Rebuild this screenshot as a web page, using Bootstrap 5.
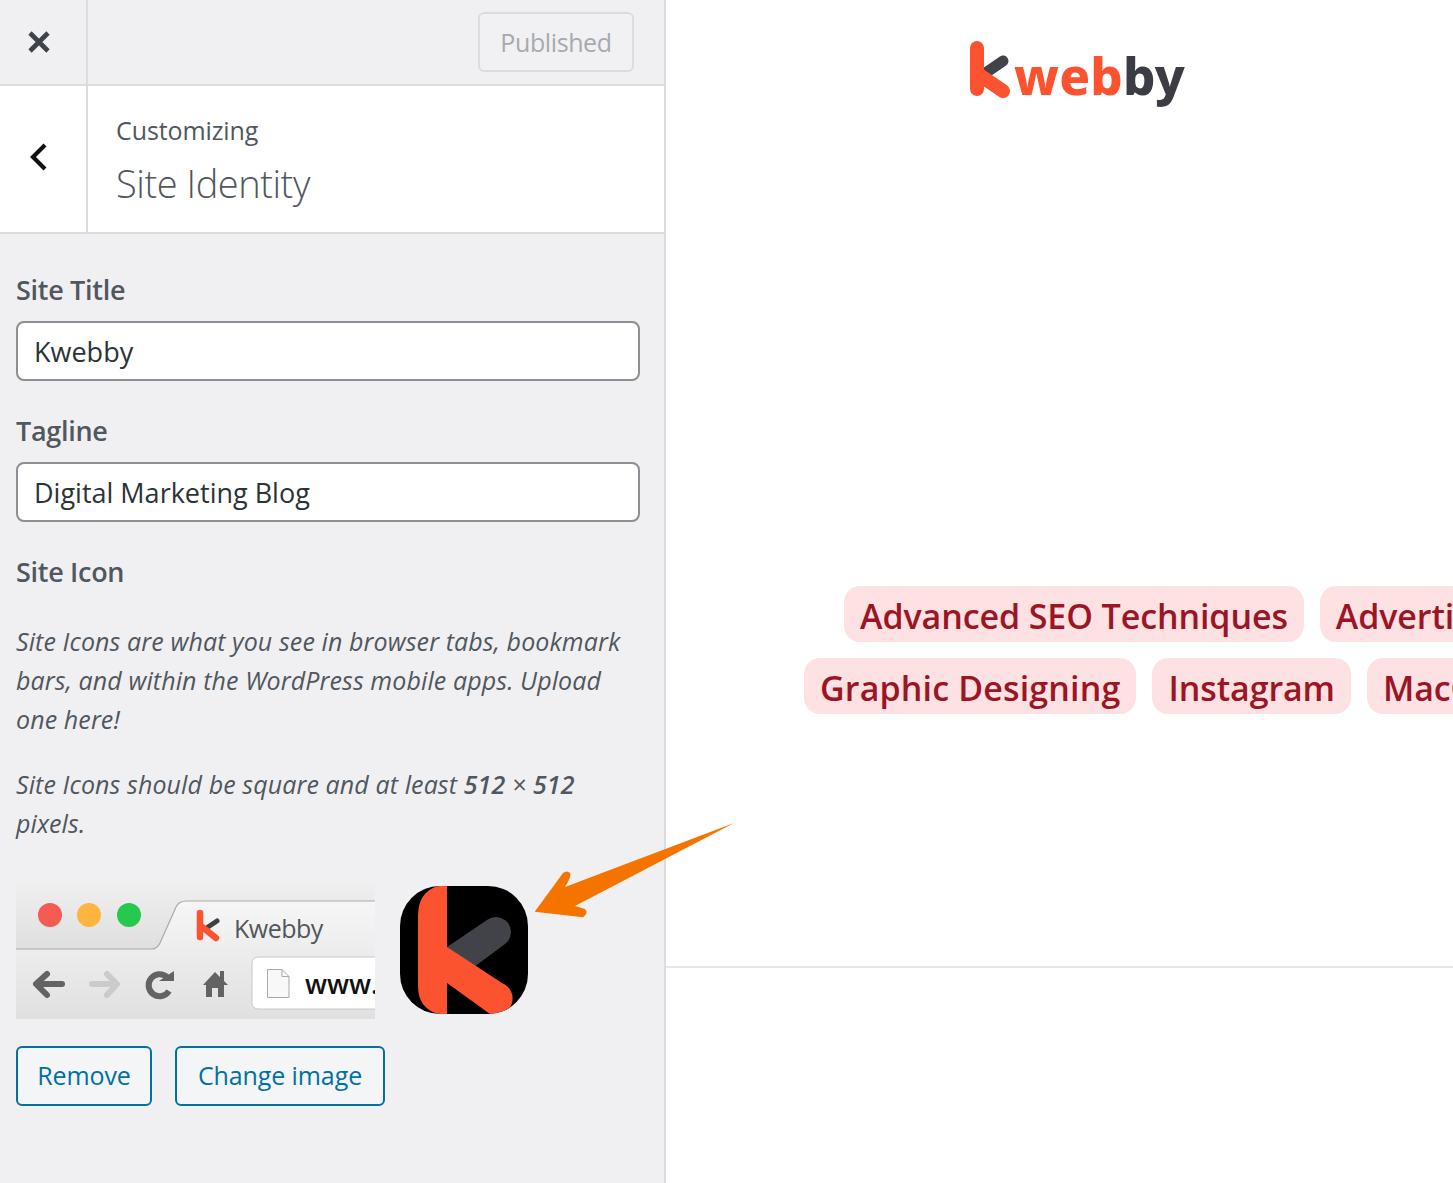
<!DOCTYPE html>
<html lang="en">
<head>
    <meta charset="UTF-8">
    <meta name="viewport" content="width=device-width, initial-scale=1.0">
    <title>Site Identity</title>
    <link href="https://cdn.jsdelivr.net/npm/bootstrap@5.3.0/dist/css/bootstrap.min.css" rel="stylesheet">
    <style>
        html, body { height: 100%; overflow: hidden; }
        body { font-family: "Open Sans", "Noto Sans", sans-serif; color: #50575e; background: #fff; position: relative; }
        .side-panel { width: 666px; height: 1183px; flex: none; background: #f0f0f3; border-right: 2px solid #dcdce0; }
        .top-bar { height: 86px; border-bottom: 2px solid #dcdcde; }
        .close-box { width: 88px; border-right: 2px solid #dcdcde; }
        .publish-btn { width: 156px; height: 60px; margin: 12px 30px 0 0; padding: 2px 0 0; font-size: 25px; letter-spacing: -.4px; color: #a7aaad; background: #f1f1f3; border: 2px solid #dcdcde; border-radius: 6px; }
        .title-bar { height: 148px; background: #fff; border-bottom: 2px solid #dcdcde; }
        .back-box { width: 88px; border-right: 2px solid #dcdcde; }
        .title-text { padding: 24px 0 0 28px; }
        .title-small { font-size: 25px; line-height: 40px; letter-spacing: -.1px; color: #50575e; }
        .title-big { font-size: 38px; line-height: 66px; font-weight: 300; letter-spacing: -.45px; color: #50575e; }
        .panel-body { padding: 36px 0 0 16px; }
        .field-label { display: block; margin: 0 0 11px; font-size: 27px; line-height: 40px; font-weight: 600; letter-spacing: -.3px; color: #50575e; }
        .field-input { width: 624px; height: 60px; margin-bottom: 30px; padding: 0 16px; font-size: 27px; color: #2c3338; background: #fff; border: 2px solid #8c8f94; border-radius: 8px; }
        .field-input:focus { border-color: #8c8f94; box-shadow: none; color: #2c3338; }
        .help-text { margin: 0 0 26px; font-size: 25px; line-height: 39px; font-style: italic; letter-spacing: .1px; color: #50575e; }
        .help-text b { font-weight: 600; }
        .help-text.first { margin-top: 30px; }
        .icon-row { margin-top: 37px; gap: 25px; }
        .tab-preview { width: 359px; height: 139px; display: block; }
        .app-icon { width: 128px; height: 128px; margin-top: 6px; display: block; }
        .btn-row { margin-top: 27px; gap: 23px; }
        .outline-btn { height: 60px; padding: 0; font-size: 25px; letter-spacing: -.1px; color: #0071a1; background: #f3f5f6; border: 2px solid #0071a1; border-radius: 6px; }
        .remove-btn { width: 136px; }
        .change-btn { width: 210px; }
        .preview-pane { min-width: 0; overflow: hidden; }
        .site-head { height: 968px; border-bottom: 2px solid #e6e6e8; }
        .brand { padding: 25px 0 0 303px; height: 150px; }
        .brand-word { font-family: "Noto Sans", sans-serif; font-size: 51px; line-height: 100px; font-weight: 800; letter-spacing: .2px; color: #fb5230; margin-left: -3px; }
        .brand-word b { color: #3c3c44; font-weight: 800; }
        .tag-lines { margin-top: 436px; gap: 16px; }
        .tag-line { gap: 16px; white-space: nowrap; }
        .tag-line.one { padding-left: 178px; }
        .tag-line.two { padding-left: 138px; }
        .tag-pill { height: 56px; line-height: 60px; padding: 0 16px; font-size: 34px; font-weight: 600; letter-spacing: -.1px; color: #9b1524; background: #fde1e3; border-radius: 16px; flex: none; }
        .tag-pill.loose { letter-spacing: .15px; }
        .arrow-over { position: absolute; left: 530px; top: 818px; width: 210px; height: 104px; }
    </style>
</head>
<body>
    <div class="d-flex">
        <div class="side-panel">
            <div class="top-bar d-flex justify-content-between">
                <div class="close-box d-flex align-items-center justify-content-center pe-2">
                    <svg width="24" height="24" viewBox="0 0 24 24"><path d="M3 3 21 21M21 3 3 21" stroke="#3c434a" stroke-width="4.6" fill="none"/></svg>
                </div>
                <button class="publish-btn" type="button" disabled>Published</button>
            </div>
            <div class="title-bar d-flex">
                <div class="back-box d-flex align-items-center justify-content-center pe-2 pb-1">
                    <svg width="20" height="30" viewBox="0 0 20 30"><path d="M16 3 4 15 16 27" stroke="#111" stroke-width="4.2" fill="none"/></svg>
                </div>
                <div class="title-text">
                    <div class="title-small">Customizing</div>
                    <div class="title-big">Site Identity</div>
                </div>
            </div>
            <form class="panel-body">
                <label class="field-label" for="siteTitle">Site Title</label>
                <input class="form-control field-input" id="siteTitle" value="Kwebby">
                <label class="field-label" for="tagline">Tagline</label>
                <input class="form-control field-input" id="tagline" value="Digital Marketing Blog">
                <div class="field-label mb-0">Site Icon</div>
                <p class="help-text first">Site Icons are what you see in browser tabs, bookmark<br>bars, and within the WordPress mobile apps. Upload<br>one here!</p>
                <p class="help-text">Site Icons should be square and at least <b>512</b> × <b>512</b><br>pixels.</p>
                <div class="icon-row d-flex align-items-start">
                    <svg class="tab-preview" viewBox="0 0 359 139" role="img" aria-label="Browser tab preview">
                        <defs>
                            <linearGradient id="chromeBg" x1="0" y1="0" x2="0" y2="1"><stop offset="0" stop-color="#f0f0f0"/><stop offset=".5" stop-color="#dfdfdf"/><stop offset=".51" stop-color="#ececec"/><stop offset="1" stop-color="#dcdcdc"/></linearGradient>
                            <linearGradient id="tabBg" x1="0" y1="0" x2="0" y2="1"><stop offset="0" stop-color="#f6f6f6"/><stop offset="1" stop-color="#e0e0e0"/></linearGradient>
                        </defs>
                        <rect width="359" height="139" fill="url(#chromeBg)"/>
                        <path d="M0 69H136Q141 69 144 63L160 27Q163 21 170 21H359V139H0Z" fill="url(#tabBg)"/>
                        <path d="M0 69H136Q141 69 144 63L160 27Q163 21 170 21H359" fill="none" stroke="#a9a9a9" stroke-width="1.2"/>
                        <circle cx="34" cy="35" r="12" fill="#f45c52"/>
                        <circle cx="73" cy="35" r="12" fill="#fdb540"/>
                        <circle cx="113" cy="35" r="12" fill="#27c84f"/>
                        <path d="M192 47 201 41" stroke="#3f3f46" stroke-width="5" stroke-linecap="round"/>
                        <path d="M184 33V57M185 46 200 58" stroke="#fb5230" stroke-width="6.5" stroke-linecap="round" fill="none"/>
                        <text x="218" y="58" font-family="Open Sans, sans-serif" font-size="25" letter-spacing="-.5" fill="#52565b">Kwebby</text>
                        <path d="M46 104H22M31 94 20 104 31 115" stroke="#636363" stroke-width="6" stroke-linecap="round" stroke-linejoin="round" fill="none"/>
                        <path d="M76 104H100M91 94 101 104 91 115" stroke="#cbcbcb" stroke-width="6" stroke-linecap="round" stroke-linejoin="round" fill="none"/>
                        <path d="M153 111A11 11 0 1 1 151 97" stroke="#636363" stroke-width="6" fill="none"/>
                        <path d="M143 101H158V91Z" fill="#636363"/>
                        <path d="M187 105 199 92 204 97V91H208V101L212 105H208V117H202V108H196V117H190V105Z" fill="#636363"/>
                        <rect x="236" y="77" width="140" height="52" rx="6" fill="#fff" stroke="#c8c8c8"/>
                        <path d="M251.500 89.500H266L273 96.500V117.500H251.500Z M266 89.500V96.500H273" fill="#f8f8f8" stroke="#a9a9a9"/>
                        <text x="289" y="114" font-family="Open Sans, sans-serif" font-size="27" font-weight="600" fill="#111">www.</text>
                    </svg>
                    <svg class="app-icon" viewBox="0 0 128 128" role="img" aria-label="Site icon">
                        <defs><clipPath id="iconClip"><rect width="128" height="128" rx="40"/></clipPath></defs>
                        <g clip-path="url(#iconClip)">
                            <rect width="128" height="128" fill="#000"/>
                            <path d="M47 61 87 34A15 15 0 0 1 105 58L70 84Z" fill="#424249"/>
                            <path d="M18 30Q18 6 38 0H47V61L102 97A16 16 0 0 1 90 128L47 97V128H38Q18 122 18 100Z" fill="#fb5230"/>
                        </g>
                    </svg>
                </div>
                <div class="btn-row d-flex">
                    <button class="outline-btn remove-btn" type="button">Remove</button>
                    <button class="outline-btn change-btn" type="button">Change image</button>
                </div>
            </form>
        </div>
        <div class="preview-pane flex-grow-1">
            <div class="site-head">
                <div class="brand d-flex align-items-start">
                    <svg width="48" height="62" viewBox="0 0 48 62" class="mt-3">
                        <path d="M18 31 34 20" stroke="#424249" stroke-width="11" stroke-linecap="round"/>
                        <path d="M8 7V48M9 33 34 50" stroke="#fb5230" stroke-width="14" stroke-linecap="round" fill="none"/>
                    </svg>
                    <span class="brand-word">web<b>by</b></span>
                </div>
                <div class="tag-lines d-flex flex-column">
                    <div class="tag-line one d-flex"><span class="tag-pill">Advanced SEO Techniques</span><span class="tag-pill">Advertising</span></div>
                    <div class="tag-line two d-flex"><span class="tag-pill loose">Graphic Designing</span><span class="tag-pill">Instagram</span><span class="tag-pill">MacOS</span></div>
                </div>
            </div>
        </div>
    </div>
    <svg class="arrow-over" viewBox="0 0 210 104">
        <path d="M4.700 93.700 33 55Q37 52 40 55 42 58 35 69L204 5 45 88 55 91Q59 95 53 99.300Z" fill="#f57400"/>
    </svg>
</body>
</html>
